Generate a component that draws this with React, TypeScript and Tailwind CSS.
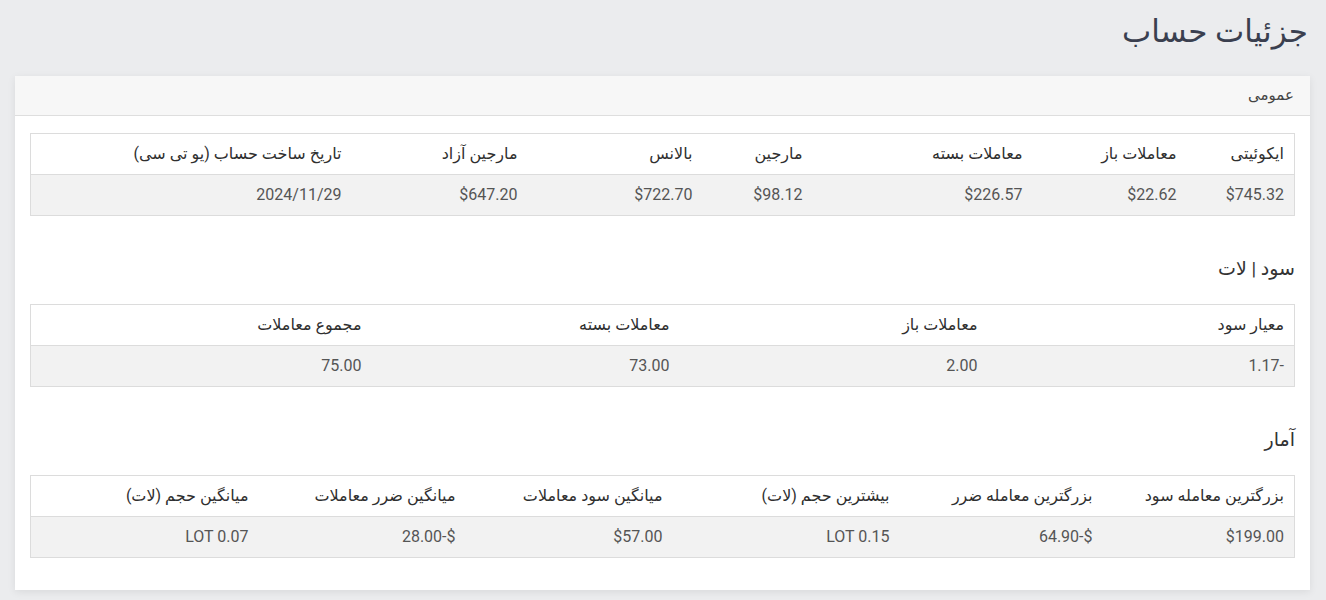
import React from "react";

type Cell = { label: string; value: string; w: string };

const general: Cell[] = [
  { label: "ایکوئیتی", value: "$745.32", w: "w-[108px]" },
  { label: "معاملات باز", value: "$22.62", w: "w-[154px]" },
  { label: "معاملات بسته", value: "$226.57", w: "w-[220px]" },
  { label: "مارجین", value: "$98.12", w: "w-[110px]" },
  { label: "بالانس", value: "$722.70", w: "w-[175px]" },
  { label: "مارجین آزاد", value: "$647.20", w: "w-[176px]" },
  { label: "تاریخ ساخت حساب (یو تی سی)", value: "2024/11/29", w: "w-[321px]" },
];

const profitLot: Cell[] = [
  { label: "معیار سود", value: "1.17-", w: "w-[307px]" },
  { label: "معاملات باز", value: "2.00", w: "w-[308px]" },
  { label: "معاملات بسته", value: "73.00", w: "w-[308px]" },
  { label: "مجموع معاملات", value: "75.00", w: "w-[341px]" },
];

const stats: Cell[] = [
  { label: "بزرگترین معامله سود", value: "$199.00", w: "w-[192px]" },
  { label: "بزرگترین معامله ضرر", value: "64.90-$", w: "w-[203px]" },
  { label: "بیشترین حجم (لات)", value: "LOT 0.15", w: "w-[227px]" },
  { label: "میانگین سود معاملات", value: "$57.00", w: "w-[207px]" },
  { label: "میانگین ضرر معاملات", value: "28.00-$", w: "w-[207px]" },
  { label: "میانگین حجم (لات)", value: "LOT 0.07", w: "w-[228px]" },
];

// values are written as they appear on screen, so they are rendered ltr
const InfoTable = ({ cells }: { cells: Cell[] }) => (
  <table className="w-full table-fixed border-collapse border border-[#dcdcdc] text-[16px]">
    <thead>
      <tr className="h-[41px] bg-white">
        {cells.map((c) => (
          <th
            key={c.label}
            className={`${c.w} px-[10px] text-right font-normal text-[#2f2f2f] whitespace-nowrap`}
          >
            {c.label}
          </th>
        ))}
      </tr>
    </thead>
    <tbody>
      <tr className="h-[41px] bg-[#f2f2f2] border-t border-[#dcdcdc]">
        {cells.map((c) => (
          <td key={c.label} dir="ltr" className="px-[10px] text-right text-[#555]">
            {c.value}
          </td>
        ))}
      </tr>
    </tbody>
  </table>
);

const App = () => {
  return (
    <div
      dir="rtl"
      className="min-h-[600px] bg-[#ebecee] px-[16px] pt-[11px] font-['Roboto','DejaVu_Sans',sans-serif]"
    >
      <h1 className="pr-[2px] text-[31px] leading-[42px] text-[#3a3f4f] mb-[23px]">جزئیات حساب</h1>

      <div className="bg-white shadow-[0_2px_8px_rgba(0,0,0,0.08)] -ml-[1px]">
        <div className="h-[40px] flex items-center px-[16px] bg-[#f7f7f7] border-b border-[#dedede] text-[15px] text-[#444]">
          عمومی
        </div>

        <div className="pt-[17px] pb-[32px] pr-[15px] pl-[16px]">
          <InfoTable cells={general} />

          <h2 className="mt-[40px] mb-[22px] text-[19px] leading-[26px] text-[#333]">سود | لات</h2>
          <InfoTable cells={profitLot} />

          <h2 className="mt-[40px] mb-[22px] text-[19px] leading-[26px] text-[#333]">آمار</h2>
          <InfoTable cells={stats} />
        </div>
      </div>
    </div>
  );
};

export default App;
